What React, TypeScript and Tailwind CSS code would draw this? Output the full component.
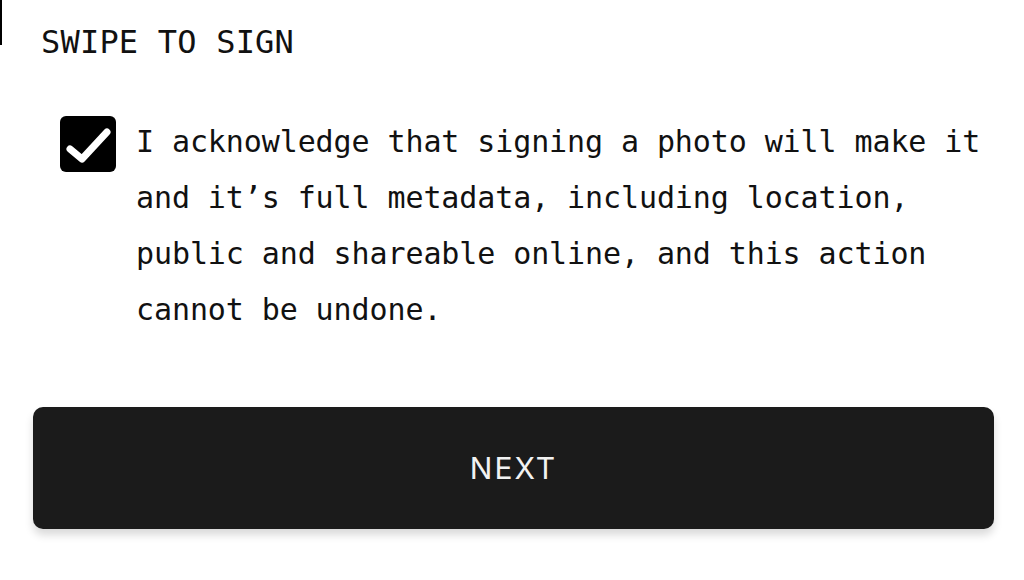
import React from "react";

export default function App() {
  return (
    <div className="relative w-[1024px] h-[580px] overflow-hidden bg-white">
      <div className="absolute left-0 top-0 w-[2px] h-[45px] bg-black" />
      <div className="pt-[22px] pl-[41px]">
        <h1
          className="text-[32px] leading-[40px] text-[#111] tracking-[0.2px]"
          style={{ fontFamily: '"DejaVu Sans Mono", "Liberation Mono", monospace' }}
        >
          SWIPE TO SIGN
        </h1>
      </div>
      <div className="mt-[52px] pl-[60px] flex items-start gap-[20px]">
        <div className="mt-[2px] w-[56px] h-[56px] shrink-0 rounded-[6px] bg-black flex items-center justify-center">
          <svg width="56" height="56" viewBox="0 0 56 56">
            <path
              d="M10 33 L22 43 L47 16"
              fill="none"
              stroke="white"
              strokeWidth="7"
              strokeLinecap="round"
              strokeLinejoin="round"
            />
          </svg>
        </div>
        <p
          className="w-[860px] text-[30px] leading-[56px] text-[#111] tracking-[-0.1px]"
          style={{ fontFamily: '"DejaVu Sans Mono", "Liberation Mono", monospace' }}
        >
          I acknowledge that signing a photo will make it and it’s full metadata, including location, public and shareable online, and this action cannot be undone.
        </p>
      </div>
      <div className="mt-[69px] pl-[33px]">
        <button
          className="w-[961px] h-[122px] rounded-[10px] bg-[#1b1b1b] text-[#f2f2f2] text-[30px] tracking-[2px] shadow-[0_6px_8px_rgba(0,0,0,0.15)] flex items-center justify-center"
          style={{ fontFamily: 'Inter, "Noto Sans", sans-serif' }}
        >
          NEXT
        </button>
      </div>
    </div>
  );
}
